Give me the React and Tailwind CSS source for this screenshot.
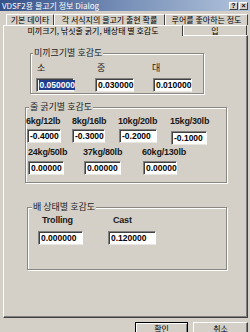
import React from "react";

const Field = ({ value, className = "", selected = false }) => (
  <div
    className={`h-[14px] bg-white border border-t-[#808080] border-l-[#808080] border-r-white border-b-[#e8e6e0] shadow-[inset_1px_1px_0_#404040] flex items-center pl-[2px] text-[8.5px] font-bold leading-none text-black font-['Liberation_Sans',sans-serif] ${className}`}
  >
    {selected ? (
      <span className="bg-[#1f3c8c] text-white px-[0.5px] py-[1px]">{value}</span>
    ) : (
      value
    )}
  </div>
);

const Label = ({ children, className = "" }) => (
  <span
    className={`block h-[10px] leading-[10px] text-[9px] font-bold text-[#1a1a1a] font-['Liberation_Sans',sans-serif] tracking-[-0.2px] ${className}`}
  >
    {children}
  </span>
);

const Group = ({ title, className = "", legendClass = "", children }) => (
  <fieldset
    className={`border border-[#8a8782] shadow-[inset_1px_1px_0_#fff,1px_1px_0_#fff] ${className}`}
  >
    <legend
      className={`bg-[#d4d0c8] px-[1px] text-[9px] leading-[12px] text-[#222] ${legendClass}`}
    >
      {title}
    </legend>
    {children}
  </fieldset>
);

const Tab = ({ children, className = "" }) => (
  <div
    className={`flex items-center justify-center border-t border-l border-t-white border-l-white border-r border-r-[#404040] text-[8px] leading-none text-black whitespace-nowrap ${className}`}
  >
    {children}
  </div>
);

const App = () => {
  return (
    <div className="w-[250px] h-[332px] overflow-hidden bg-[#d4d0c8] font-['Noto_Sans_CJK_KR','Noto_Sans',sans-serif]">
      {/* title bar */}
      <div className="h-[11px] flex items-center justify-between bg-gradient-to-r from-[#34508a] via-[#7890b8] to-[#b3c4dc] pl-[2px] pr-[2px]">
        <span className="text-[8px] leading-none text-white">
          VDSF2용 물고기 정보 Dialog
        </span>
        <div className="flex gap-[1px]">
          <div className="w-[9px] h-[8px] bg-[#d4d0c8] border-t border-l border-white border-r border-b border-r-[#404040] border-b-[#404040] flex items-center justify-center text-[7px] font-bold leading-none font-['Liberation_Sans',sans-serif]">
            ?
          </div>
          <div className="w-[9px] h-[8px] bg-[#d4d0c8] border-t border-l border-white border-r border-b border-r-[#404040] border-b-[#404040] flex items-center justify-center text-[7px] font-bold leading-none font-['Liberation_Sans',sans-serif]">
            ×
          </div>
        </div>
      </div>

      {/* tabs */}
      <div className="flex pl-[6px] mt-[3px] h-[11px]">
        <Tab className="w-[48px]">기본 데이타</Tab>
        <Tab className="w-[111px]">각 서식지의 물고기 출현 확률</Tab>
        <Tab className="w-[83px]">루어를 좋아하는 정도</Tab>
      </div>
      <div className="flex pl-[3px] h-[10px]">
        <Tab className="w-[180px] relative z-10 h-[11px] bg-[#d4d0c8] border-r-[#404040]">
          미끼크기, 낚싯줄 굵기, 배상태 별 호감도
        </Tab>
        <Tab className="w-[64px]">입</Tab>
      </div>

      {/* panel */}
      <div className="ml-[3px] w-[245px] h-[283px] border-t border-l border-white border-r border-b border-r-[#404040] border-b-[#404040] shadow-[inset_-1px_-1px_0_#808080] pt-[11px]">
        <Group title="미끼크기별 호감도" className="ml-[26px] w-[174px] pb-[1px]" legendClass="ml-[2px]">
          <div className="flex mt-[4px] text-[9px] leading-[10px] text-[#1a1a1a]">
            <span className="ml-[6px] w-[60px]">소</span>
            <span className="w-[55px]">중</span>
            <span>대</span>
          </div>
          <div className="flex mt-[5px]">
            <Field value="0.050000" selected className="ml-[5px] w-[38px]" />
            <Field value="0.030000" className="ml-[21px] w-[39px]" />
            <Field value="0.010000" className="ml-[19px] w-[39px]" />
          </div>
        </Group>

        <Group title="줄 굵기별 호감도" className="ml-[21px] mt-[7px] w-[202px] pb-[7px]" legendClass="ml-[3px]">
          <div className="flex mt-[3px]">
            <Label className="w-[46px]">6kg/12lb</Label>
            <Label className="w-[46px]">8kg/16lb</Label>
            <Label className="w-[52px]">10kg/20lb</Label>
            <Label>15kg/30lb</Label>
          </div>
          <div className="flex mt-[3px] items-start">
            <Field value="-0.4000" className="ml-[1px] w-[34px]" />
            <Field value="-0.3000" className="ml-[11px] w-[33px]" />
            <Field value="-0.2000" className="ml-[14px] w-[38px]" />
            <Field value="-0.1000" className="ml-[14px] w-[36px] mt-[2px]" />
          </div>
          <div className="flex mt-[2px]">
            <Label className="ml-[2px] w-[55px]">24kg/50lb</Label>
            <Label className="w-[59px]">37kg/80lb</Label>
            <Label>60kg/130lb</Label>
          </div>
          <div className="flex mt-[4px]">
            <Field value="0.00000" className="ml-[2px] w-[36px]" />
            <Field value="0.00000" className="ml-[20px] w-[37px]" />
            <Field value="0.00000" className="ml-[22px] w-[34px]" />
          </div>
        </Group>

        <Group title="배 상태별 호감도" className="ml-[23px] mt-[18px] w-[200px] pb-[24px]" legendClass="ml-[4px]">
          <div className="flex mt-[2px]">
            <Label className="ml-[14px] w-[71px]">Trolling</Label>
            <Label>Cast</Label>
          </div>
          <div className="flex mt-[6px]">
            <Field value="0.000000" className="ml-[10px] w-[45px]" />
            <Field value="0.120000" className="ml-[25px] w-[48px]" />
          </div>
        </Group>
      </div>

      {/* buttons */}
      <div className="flex justify-end gap-[5px] pr-[2px] mt-[4px]">
        <button className="w-[53px] h-[16px] bg-[#d4d0c8] border border-black shadow-[inset_1px_1px_0_#fff,inset_-1px_-1px_0_#808080] text-[8px] leading-none text-black pb-[3px]">
          확인
        </button>
        <button className="w-[55px] h-[16px] bg-[#d4d0c8] border-t border-l border-white border-r border-b border-r-[#404040] border-b-[#404040] shadow-[inset_-1px_-1px_0_#808080] text-[8px] leading-none text-black pb-[3px]">
          취소
        </button>
      </div>
    </div>
  );
};

export default App;
